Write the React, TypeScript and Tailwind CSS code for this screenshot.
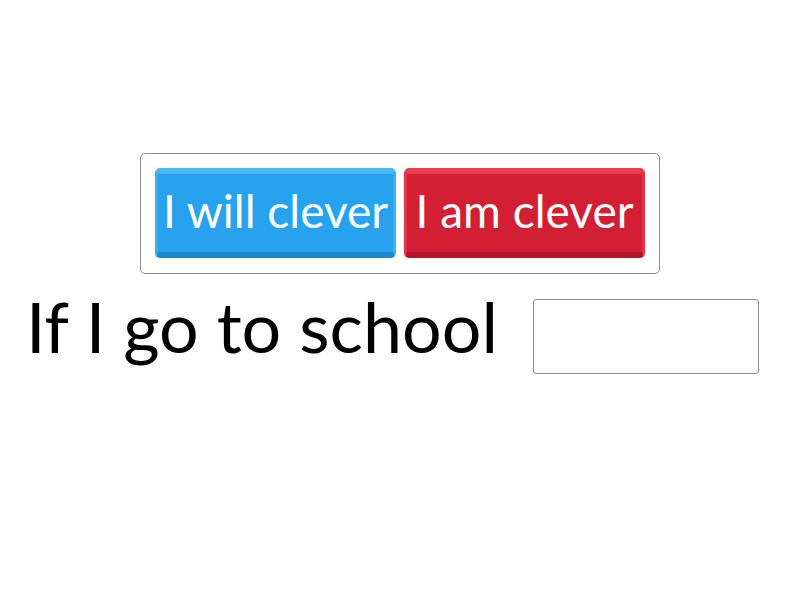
const App = () => {
  return (
    <div className="w-[800px] h-[600px] bg-white font-['Lato',sans-serif] text-black">
      <div className="pt-[153px] flex justify-center">
        <div className="w-[520px] h-[121px] border border-[#8c8c8c] rounded-[5px] px-[14px] pt-[14px] flex gap-[8px]">
          <button className="w-[241px] h-[90px] rounded-[5px] bg-[#26a2ee] border-t-[6px] border-x-[3px] border-b-[6px] border-t-[#44b8f8] border-x-[#3aaff5] border-b-[#1a87d2] text-white text-[46px] leading-none whitespace-nowrap flex items-center justify-center pb-[5px]">
            I will clever
          </button>
          <button className="w-[241px] h-[90px] rounded-[5px] bg-[#d31f33] border-t-[6px] border-x-[3px] border-b-[6px] border-t-[#e73d4f] border-x-[#e23547] border-b-[#b3142a] text-white text-[46px] leading-none whitespace-nowrap flex items-center justify-center pb-[5px]">
            I am clever
          </button>
        </div>
      </div>
      <div className="flex items-start mt-[25px] pl-[26px]">
        <span className="text-[70px] leading-none w-[507px] -mt-[8px]">If I go to school</span>
        <div className="w-[226px] h-[75px] border border-[#8c8c8c] rounded-[3px]" />
      </div>
    </div>
  );
};

export default App;
